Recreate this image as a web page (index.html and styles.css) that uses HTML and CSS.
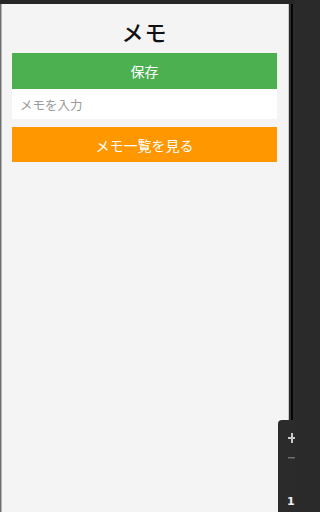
FILE: index.html
```html
<!DOCTYPE html>
<html lang="ja">
<head>
<meta charset="utf-8">
<title>メモ</title>
<link rel="stylesheet" href="styles.css">
</head>
<body>
<div class="device">
  <div class="topbar"></div>
  <div class="row">
    <div class="edge-left"></div>
    <main class="app">
      <h1 class="title">メモ</h1>
      <button class="btn btn-save">保存</button>
      <input class="memo-input" type="text" placeholder="メモを入力">
      <button class="btn btn-list">メモ一覧を見る</button>
    </main>
    <div class="edge-right">
      <div class="edge-line"></div>
      <div class="edge-dark"></div>
      <div class="edge-black"></div>
      <div class="edge-dark2"></div>
    </div>
  </div>
  <div class="zoom-panel">
    <svg class="zp-icons" width="17" height="92" viewBox="0 0 17 92">
      <rect x="10" y="17" width="7" height="2" fill="#c8c8c8"/>
      <rect x="13" y="13" width="2" height="10" fill="#c8c8c8"/>
      <rect x="10" y="37" width="7" height="1.5" fill="#6f6f6f"/>
    </svg>
    <span class="zp-clock">1</span>
  </div>
</div>
</body>
</html>
```
FILE: styles.css
```css
html, body {
  margin: 0;
  padding: 0;
  width: 295px;
  height: 512px;
  overflow: hidden;
  background: #2a2a2a;
  font-family: "Noto Sans CJK JP", "Noto Sans", sans-serif;
}

.device {
  position: relative;
  width: 295px;
  height: 512px;
  display: flex;
  flex-direction: column;
}

.topbar {
  height: 4px;
  background: #262626;
  flex: none;
}

.row {
  flex: 1;
  display: flex;
}

.edge-left {
  width: 2px;
  background: linear-gradient(to right, #6e6e6e 0 1px, #b4b4b4 1px 2px);
  flex: none;
}

.app {
  flex: 1;
  background: #f4f4f4;
  padding: 0 11px 0 10px;
  display: flex;
  flex-direction: column;
}

.title {
  margin: 0;
  height: 49px;
  box-sizing: border-box;
  padding-top: 4px;
  display: flex;
  align-items: center;
  justify-content: center;
  font-size: 22px;
  font-weight: 500;
  color: #111;
  letter-spacing: 1px;
}

.btn {
  border: none;
  margin: 0;
  padding: 0;
  width: 100%;
  color: #fff;
  font-family: inherit;
  font-size: 14px;
  display: flex;
  align-items: center;
  justify-content: center;
}

.btn-save {
  height: 36px;
  background: #4caf50;
}

.memo-input {
  height: 30px;
  box-sizing: border-box;
  border: none;
  margin: 0;
  padding: 0 8px;
  background: #fff;
  font-family: inherit;
  font-size: 12.5px;
  outline: none;
}

.memo-input::placeholder {
  color: #9a9a9a;
}

.btn-list {
  margin-top: 8px;
  height: 35px;
  background: #ff9800;
}

.edge-right {
  width: 7px;
  flex: none;
  display: flex;
}

.edge-line {
  width: 1px;
  background: #c8c8c8;
}

.edge-dark {
  width: 2px;
  background: #2c2c2c;
}

.edge-black {
  width: 2px;
  background: #050505;
}

.edge-dark2 {
  width: 2px;
  background: #2c2c2c;
}

.zoom-panel {
  position: absolute;
  left: 278px;
  top: 420px;
  width: 17px;
  height: 92px;
  background: #2b2b2b;
  border-top-left-radius: 4px;
  overflow: hidden;
  font-family: "DejaVu Sans", sans-serif;
}

.zp-icons {
  position: absolute;
  left: 0;
  top: 0;
  display: block;
}

.zp-clock {
  position: absolute;
  left: 9px;
  top: 76px;
  line-height: 1;
  font-size: 11px;
  font-weight: bold;
  color: #eee;
}
```
